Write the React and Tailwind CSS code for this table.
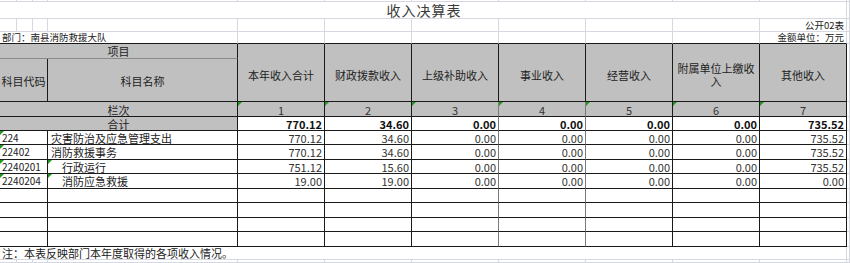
import React from 'react'
import clsx from 'clsx'

const FAINT = 'border-[#d5d8e1]'

const heads = ['本年收入合计', '财政拨款收入', '上级补助收入', '事业收入', '经营收入', '附属单位上缴收入', '其他收入']
const totals = ['770.12', '34.60', '0.00', '0.00', '0.00', '0.00', '735.52']
const rows = [
  { code: '224', name: '灾害防治及应急管理支出', sub: false, vals: ['770.12', '34.60', '0.00', '0.00', '0.00', '0.00', '735.52'] },
  { code: '22402', name: '消防救援事务', sub: false, vals: ['770.12', '34.60', '0.00', '0.00', '0.00', '0.00', '735.52'] },
  { code: '2240201', name: '行政运行', sub: true, vals: ['751.12', '15.60', '0.00', '0.00', '0.00', '0.00', '735.52'] },
  { code: '2240204', name: '消防应急救援', sub: true, vals: ['19.00', '19.00', '0.00', '0.00', '0.00', '0.00', '0.00'] },
]

// right border colour of the value columns (cols 3 and 4 are a grey double line in the sheet)
const valBorder = (i) => (i === 2 || i === 3 ? 'border-r-[#7a7a7a]' : 'border-r-[#1a1a1a]')

function C({ className, children, tri }) {
  return (
    <div className={clsx('relative flex items-center overflow-hidden whitespace-nowrap border-r border-b', className)}>
      {tri && <span className="absolute left-0 top-0 h-0 w-0 border-t-[4px] border-r-[4px] border-t-[#1e9a1e] border-r-transparent" />}
      {children}
    </div>
  )
}

export default function App() {
  return (
    <div
      className="grid h-[263px] w-[850px] overflow-hidden bg-white text-[11px] leading-[12px] text-[#222] grid-cols-[17px_16px_15px_190px_87px_87px_87px_87px_87px_87px_87px_3px] grid-rows-[2px_17px_13px_12px_15px_43px_15px_14px_14px_15px_14px_15px_14px_15px_14px_15px_13px_3px]"
      style={{ fontFamily: '"Noto Sans CJK SC", "Noto Sans", sans-serif' }}
    >
      {/* sheet row above the title */}
      {Array.from({ length: 12 }).map((_, i) => (
        <C key={'r0' + i} className={FAINT} />
      ))}

      {/* title */}
      <C className={clsx('col-span-11 justify-center text-[14px] leading-[16px] text-[#3a3a3a]', FAINT)}>
        <span className="pl-[2px] tracking-[1px]">收入决算表</span>
      </C>
      <C className={FAINT} />

      {/* 公开02表 */}
      {Array.from({ length: 10 }).map((_, i) => (
        <C key={'r2' + i} className={FAINT} />
      ))}
      <C className={clsx('justify-end pr-[2px] text-[9.5px] leading-[12px]', FAINT)}>公开02表</C>
      <C className={FAINT} />

      {/* 部门 / 金额单位 */}
      <C className="col-span-4 pl-[2px] text-[9.5px] leading-[11px] border-r-[#d5d8e1] border-b-[#1a1a1a]">部门：南县消防救援大队</C>
      {Array.from({ length: 6 }).map((_, i) => (
        <C key={'r3' + i} className="border-r-[#d5d8e1] border-b-[#1a1a1a]" />
      ))}
      <C className="justify-end pr-[2px] text-[9.5px] leading-[11px] border-r-[#d5d8e1] border-b-[#1a1a1a]">金额单位：万元</C>
      <C className={FAINT} />

      {/* header */}
      <C className="col-span-4 justify-center bg-[#c0c0c0] border-r-[#1a1a1a] border-b-[#8a8a8a]">项目</C>
      {heads.map((h) => (
        <C key={h} className="row-span-2 justify-center bg-[#c0c0c0] border-[#1a1a1a] pt-[4px]">
          {h === '附属单位上缴收入' ? (
            <span className="text-center leading-[13px]">附属单位上缴收<br />入</span>
          ) : (
            h
          )}
        </C>
      ))}
      <C className={clsx('row-span-2', FAINT)} />
      <C className="col-span-3 justify-center bg-[#c0c0c0] border-[#1a1a1a] pt-[1px]">科目代码</C>
      <C className="justify-center bg-[#c0c0c0] border-[#1a1a1a] pt-[1px]">科目名称</C>

      {/* 栏次 */}
      <C className="col-span-4 justify-center bg-[#c0c0c0] border-[#1a1a1a] pt-[1px]">栏次</C>
      {heads.map((h, i) => (
        <C key={'n' + i} tri className={clsx('justify-center bg-[#c0c0c0] border-b-[#1a1a1a] pt-[2px] text-[#333]', valBorder(i))}>
          {i + 1}
        </C>
      ))}
      <C className={FAINT} />

      {/* 合计 */}
      <C className="col-span-4 justify-center bg-[#c0c0c0] border-[#1a1a1a]">合计</C>
      {totals.map((v, i) => (
        <C key={'t' + i} className={clsx('justify-end pr-[2px] font-bold tabular-nums text-[#111] border-b-[#1a1a1a]', valBorder(i))}>
          {v}
        </C>
      ))}
      <C className={FAINT} />

      {/* data rows */}
      {rows.map((r) => (
        <React.Fragment key={r.code}>
          <C tri className="col-span-3 pl-[2px] text-[10px] tabular-nums border-[#1a1a1a]">{r.code}</C>
          <C tri={r.sub} className={clsx('border-[#1a1a1a]', r.sub ? 'pl-[14px]' : 'pl-[3px]')}>{r.name}</C>
          {r.vals.map((v, i) => (
            <C key={i} className={clsx('justify-end pr-[2px] tabular-nums text-[#333] border-b-[#1a1a1a]', valBorder(i))}>
              {v}
            </C>
          ))}
          <C className={FAINT} />
        </React.Fragment>
      ))}

      {/* empty rows */}
      {Array.from({ length: 4 }).map((_, k) => (
        <React.Fragment key={'e' + k}>
          <C className="col-span-3 border-[#1a1a1a]" />
          <C className="border-[#1a1a1a]" />
          {heads.map((h, i) => (
            <C key={i} className={clsx('border-b-[#1a1a1a]', valBorder(i))} />
          ))}
          <C className={FAINT} />
        </React.Fragment>
      ))}

      {/* note */}
      <C className={clsx('col-span-11 pl-[2px]', FAINT)}>注：本表反映部门本年度取得的各项收入情况。</C>
      <C className={FAINT} />
      {Array.from({ length: 12 }).map((_, i) => (
        <C key={'z' + i} className={FAINT} />
      ))}
    </div>
  )
}
